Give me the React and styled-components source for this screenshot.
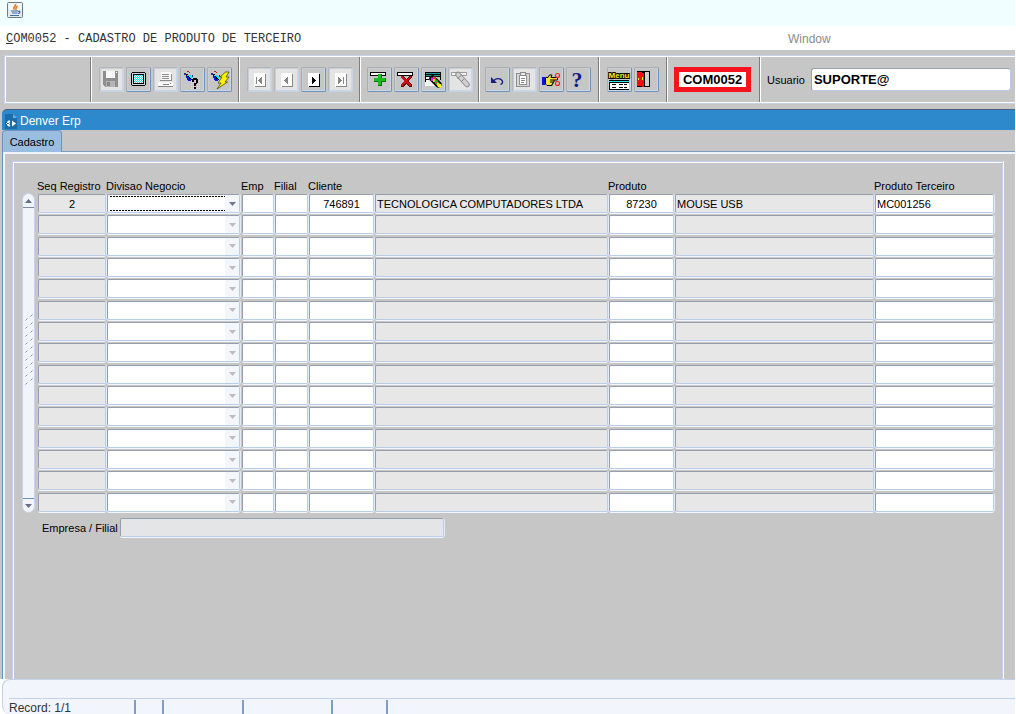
import React from "react";
import styled, { createGlobalStyle } from "styled-components";

const GlobalStyle = createGlobalStyle`
    * {
        box-sizing: border-box;
    }
    body {
        margin: 0;
        background-color: #fff;
        font-family: "Liberation Sans", Arial, sans-serif;
        font-size: 11px;
        color: #000;
    }
    button, input, select {
        font-family: inherit;
        font-size: inherit;
        color: inherit;
        margin: 0;
    }
`;
const Page = styled.div`
    min-height: 100vh;
    display: flex;
    flex-direction: column;
    padding-right: 1px;
`;
const TitleBar = styled.header`
    height: 26px;
    padding: 2px 7px;
    background-color: #f0feff;
`;
const MenuBar = styled.nav`
    height: 24px;
    display: grid;
    grid-template-columns: 782fr 227fr;
    align-items: center;
    padding: 2px 0 0 6px;
    background-color: #fff;
`;
const MenuItem = styled.button`
    justify-self: start;
    padding: 0;
    border: none;
    background: none;
    font-size: 12px;
    color: ${(props) => (props.$muted ? "#8c8c8c" : "#333")};
    font-family: ${(props) => (props.$mono ? '"Liberation Mono", "Courier New", monospace' : "inherit")};
`;
const ToolbarArea = styled.div`
    padding: 5px 0 5px 4px;
    background-color: #c6c6c6;
`;
const Toolbar = styled.div`
    display: flex;
    height: 49px;
    border: 1px solid #c3d3ea;
    border-right: none;
    box-shadow: inset 1px 1px 0 #fff, inset 0 -1px 0 #fff;
    padding: 1px 0 1px 1px;
`;
const ToolGroup = styled.div`
    display: flex;
    align-items: center;
    gap: ${(props) => props.$gap || "2px"};
    width: ${(props) => props.$width};
    flex: ${(props) => (props.$grow ? "1 1 auto" : "none")};
    padding: 0 4px 0 ${(props) => props.$inset || "7px"};
    border-right: ${(props) => (props.$grow ? "none" : "1px solid #7c7c7c")};
    box-shadow: ${(props) => (props.$first ? "none" : "inset 1px 0 0 #fff")};
`;
const ToolButton = styled.button`
    width: 25px;
    height: 25px;
    padding: 0;
    border: 1px solid;
    border-color: ${(props) => (props.disabled ? "#b2b5ba #c4d4e6 #c4d4e6 #b2b5ba" : "#adadad #6e92bb #6e92bb #adadad")};
    border-radius: 2px;
    background-color: ${(props) => (props.disabled ? "#e4e4e4" : "#c6c6c6")};
    box-shadow: inset 1px 1px 0 #c9ced6, inset -1px -1px 0 #c9d6e6;

    svg {
        display: block;
    }
`;
const ScreenCode = styled.strong`
    width: 77px;
    height: 25px;
    border: 5px solid #f5141d;
    background-color: #fff;
    font-size: 13px;
    line-height: 15px;
    text-align: center;
`;
const UserInput = styled.input`
    flex: 1;
    min-width: 0;
    height: 23px;
    padding: 0 2px;
    border: 1px solid;
    border-color: #9aa3b1 #b8cce6 #b8cce6 #9aa3b1;
    border-radius: 3px;
    outline: none;
    background-color: #fff;
    font-size: 13px;
    font-weight: bold;
`;
const Workspace = styled.main`
    flex: 1;
    display: flex;
    flex-direction: column;
    padding-left: 2px;
    background-color: #c6c6c6;
`;
const WindowTitle = styled.div`
    height: 21px;
    display: flex;
    align-items: center;
    gap: 3px;
    padding: 2px 3px 0;
    border-top: 1px solid #4a6080;
    border-radius: 5px 0 0 0;
    background-color: #2d89cc;
    color: #fff;
    font-size: 12px;
`;
const TabBar = styled.div`
    height: 22px;
    display: flex;
    border-bottom: 1px solid #7f9dbd;
`;
const Tab = styled.button`
    width: 60px;
    height: 22px;
    padding: 1px 0 0;
    border: 1px solid #7093bd;
    border-bottom: none;
    border-radius: 4px 4px 0 0;
    background-color: #9bbde0;
`;
const Panel = styled.section`
    flex: 1;
    display: flex;
    padding: 9px 12px 0 9px;
    border-left: 1px solid #6c91bb;
    box-shadow: inset 2px 2px 0 #f0f5fc;
`;
const Frame = styled.div`
    flex: 1;
    min-width: 0;
    padding: 17px 7px 0 9px;
    border: 1px solid #bfd0ea;
    border-bottom: none;
    box-shadow: inset 1px 1px 0 #fff, 1px 0 0 #fff;
`;
const GridArea = styled.div`
    display: flex;
    gap: 3px;
`;
const ScrollBar = styled.div`
    width: 13px;
    display: flex;
    flex-direction: column;
    justify-content: space-between;
    align-items: center;
    margin-top: 14px;
    border: 1px solid #c5d6ea;
    border-radius: 7px;
    background-color: #f1f5fb;
    overflow: hidden;
`;
const ScrollButton = styled.button`
    width: 100%;
    height: 14px;
    padding: 0;
    border: none;
    border-top: ${(props) => (props.$down ? "1px solid #6e92bb" : "none")};
    border-bottom: ${(props) => (props.$down ? "none" : "1px solid #7b89a5")};
    background: none;

    svg {
        display: block;
        margin: 0 auto;
    }
`;
const Records = styled.table`
    flex: 1;
    width: 100%;
    min-width: 0;
    table-layout: fixed;
    border-collapse: collapse;
`;
const HeadCell = styled.th`
    height: 14px;
    padding: 0;
    font-weight: normal;
    text-align: left;
    text-indent: -1px;
    white-space: nowrap;
    vertical-align: top;
    line-height: 14px;
`;
const Row = styled.tr`
    height: 21px;

    &:nth-child(3n) {
        height: 22px;
    }
    td {
        height: inherit;
        padding: 1px 1px 1px 0;
    }
    td:nth-child(2) {
        padding-right: 2px;
    }
`;
const cellBorder = `
    border: 1px solid;
    border-color: #979eab #b9cce8 #b9cce8 #979eab;
    border-radius: 2px;
    box-shadow: 0 1px 0 #f2f7ff, 1px 0 0 #e3ecf8;
    outline: none;
`;
const CellInput = styled.input`
    display: block;
    width: 100%;
    height: 19px;
    padding: 1px 1px 0;
    ${cellBorder}
    background-color: ${(props) => (props.readOnly ? "#e7e7e7" : "#fff")};
    text-align: ${(props) => (props.$center ? "center" : "left")};
`;
const Combo = styled.div`
    display: flex;
    width: 100%;
    height: 19px;
    padding-left: 2px;
    ${cellBorder}
    background-color: #fff;
`;
const ComboSelect = styled.select`
    flex: 1;
    min-width: 0;
    height: 100%;
    appearance: none;
    padding: 0;
    border: none;
    outline: none;
    background: ${(props) =>
        props.$focused
            ? `repeating-linear-gradient(90deg, #000 0 2px, transparent 2px 3px) 0 1px / 100% 1px no-repeat,
               repeating-linear-gradient(90deg, #000 0 2px, transparent 2px 3px) 0 15px / 100% 1px no-repeat`
            : "none"};
    opacity: 1;
`;
const ComboArrow = styled.span`
    width: 14px;
    display: flex;
    align-items: center;
    justify-content: center;
    background-color: #f3f6fb;
    pointer-events: none;
`;
const BranchLine = styled.div`
    display: flex;
    align-items: center;
    gap: 2px;
    margin-top: 5px;
    padding-left: 20px;
`;
const BranchInput = styled(CellInput)`
    width: 34%;
    background-color: #e4e5e7;
`;
const StatusBar = styled.footer`
    height: 35px;
    margin-left: 2px;
    padding: 18px 0 0 6px;
    border: 1px solid #c2d3e8;
    border-width: 1px 0 0 1px;
    border-radius: 8px 0 0 8px;
    background-color: #f2f5fb;
`;
const StatusLine = styled.div`
    display: flex;
    height: 16px;
    padding-top: 1px;
    border-top: 1px solid #c2d3ee;
    background-color: #f2f5fb;
    color: #333;
    font-size: 12px;
`;
const StatusCell = styled.div`
    width: ${(props) => props.$width};
    padding-top: 1px;
    border-right: 2px solid #7f9cc2;
`;

const JavaIcon = () => (
    <svg width="16" height="16" viewBox="0 0 16 16" fill="none">
        <rect x="0.5" y="0.5" width="15" height="15" rx="1" fill="#e3e9ed" stroke="#6f7b84" />
        <path d="M1.5 1.5h13v6h-13z" fill="#f4f8fa" />
        <path d="M8.5 2c1 2-3.5 3-1 5.500M10.500 4C8 5.500 9 6 9 8" stroke="#ee7a22" strokeWidth="1.600" />
        <path d="M4 9h7M5 11h5.500M3 13.500h9M11 9.500c3-1 2 2 0 2" stroke="#3f6d9e" strokeWidth="1.200" />
    </svg>
);

const Svg = ({ children, smooth }) => (
    <svg width="23" height="23" viewBox="1 1 23 23" shapeRendering={smooth ? "auto" : "crispEdges"} fill="none" aria-hidden="true">
        {children}
    </svg>
);

const SaveIcon = () => (
    <Svg>
        <path d="M4 4h15v16H6l-2-2z" fill="#8e8e8e" />
        <path d="M7 4h9v7H7z" fill="#f8f8f8" />
        <path d="M17 5h1v1h-1z" fill="#fff" />
        <path d="M7 14h9v6H7z" fill="#b5b5b5" />
        <path d="M8 15h3v4H8z" fill="#858585" />
    </Svg>
);
const ScreenIcon = () => (
    <Svg>
        <path d="M6 5h13v1h1v12h-1v1H6v-1H5V6h1z" fill="#000" />
        <path d="M6 6h13v12H6z" fill="#d5d5d5" />
        <path d="M7 7h11v10H7z" fill="#000" />
        <path d="M8 8h9v8H8z" fill="#f2ffff" />
        <path d="M8 8.500h9M8 10.500h9M8 12.500h9M8 14.500h9" stroke="#35dfe6" strokeDasharray="1 1" />
        <path d="M9 9.500h8M9 11.500h8M9 13.500h8M9 15.500h8" stroke="#35dfe6" strokeDasharray="1 1" />
    </Svg>
);
const PrinterIcon = () => (
    <Svg>
        <path d="M8 5h9l2 2v7H8z" fill="#fafafa" />
        <path d="M9 7.500h7M9 9.500h7M9 11.500h7M7 13.500h12M18.500 7v7" stroke="#8c8c8c" />
        <path d="M5 15h15v4H5z" fill="#fafafa" />
        <path d="M5 19.500h15M10 17.500h6" stroke="#888" />
        <path d="M17 16h1v1h-1z" fill="#888" />
    </Svg>
);
const Torch = () => (
    <>
        <path d="M4 6h2v1h2v1h2v1h2v4h-2v1H8v-2H7v-2H6V8H4z" fill="#000" />
        <path d="M7 8h4v1h2v2h-1v1h-1v-1h-1v-1H9V9H7z" fill="#28dfea" />
        <path d="M6 9h2v1h1v2h2v2H8v-1H7v-2H6z" fill="#0b17d8" />
        <path d="M4 6h2v2H4z" fill="#223a86" />
        <path d="M7 4h2v1H7zM9 5h1v1H9z" fill="#d51818" />
        <path d="M12 8h1v2h-1z" fill="#243b70" />
    </>
);
const QueryIcon = () => (
    <Svg>
        <path d="M11 13.500h10M11 15.500h10M11 17.500h10M11 19.500h10M11 21.500h10" stroke="#f2ee55" strokeDasharray="1 1" />
        <path d="M12 12h1v-1h4v1h1v4h-1v1h-1v2h-2v-3h2v-3h-2v2h-2zM14 20h2v2h-2z" fill="#000" />
        <Torch />
    </Svg>
);
const ExecuteIcon = () => (
    <Svg smooth>
        <Torch />
        <path d="M18.500 5h3.500l-3 5h3l-4 5h2.500L10 22l4-6h-3l4-6h-2z" fill="#fbf300" stroke="#4d4900" strokeWidth="0.800" />
    </Svg>
);
const NavIcon = ({ glyph, active }) => (
    <Svg>
        <path d="M7 6h11v14H7z" fill="#fcfcfc" />
        <path d="M8 19.500h10.500V7" stroke={active ? "#000" : "#8a8a8a"} />
        <path d={glyph} fill={active ? "#000" : "#858585"} />
    </Svg>
);
const RecordBar = () => <path d="M3.500 5.500h15v3h-15z" fill="#fff" stroke="#000" />;
const InsertIcon = () => (
    <Svg>
        <RecordBar />
        <path d="M11 7h4v4h4v4h-4v4h-4v-4H7v-4h4z" fill="#08730d" />
        <path d="M11 7h3v4h4v3h-4v4h-3v-4H7v-3h4z" fill="#18bd20" />
    </Svg>
);
const DeleteIcon = () => (
    <Svg>
        <RecordBar />
        <path d="M7 9h3v1h1v1h1v1h1v-1h1v-1h1V9h3v2h-1v1h-1v1h-1v2h1v1h1v1h1v3h-3v-1h-1v-1h-1v-1h-1v1h-1v1h-1v1H7v-3h1v-1h1v-1h1v-2H9v-1H8v-1H7z" fill="#650505" />
        <path d="M7 9h2v1h1v1h1v1h3v-1h1v-1h1V9h1v2h-1v1h-1v1h-1v2h1v1h1v1h1v2h-2v-1h-1v-1h-1v-1h-2v1h-1v1h-1v1H7v-2h1v-1h1v-1h1v-2H9v-1H8v-1H7z" fill="#c91016" />
    </Svg>
);
const ClearRecordIcon = () => (
    <Svg smooth>
        <path d="M4 10h12v9H4z" fill="#f4f4f4" />
        <path d="M4 5h16v5H4z" fill="#000" />
        <path d="M5 6h14v1H5zM5 8h14v1H5z" fill="#1d9a9e" />
        <path d="M4.500 10v5M5 12.500h3M19.500 10v3" stroke="#000" />
        <path d="M11.500 11.500l6 6" stroke="#000" strokeWidth="6.500" strokeLinecap="round" />
        <path d="M10 10.500h3.500V14H10z" fill="#ee1bd8" />
        <path d="M12 9.500h3V12h-3z" fill="#ed332c" />
        <path d="M12 12h2.500v3H12z" fill="#f3e822" />
        <path d="M14 12l2.500 1 1.500 3-3 1.500-1.500-2z" fill="#17b925" />
        <path d="M16.500 15.500l4 2v3h-3l-2-3z" fill="#fff01c" />
        <path d="M14.500 16.500l2-2" stroke="#ed332c" />
    </Svg>
);
const LockIcon = () => (
    <Svg smooth>
        <path d="M3.500 5.500h15v3h-15z" fill="#f4f4f4" stroke="#999" />
        <path d="M10 7.500l9 10" stroke="#8f8f8f" strokeWidth="5.500" strokeLinecap="round" />
        <path d="M10 7.500l9 10" stroke="#d0d0d0" strokeWidth="3.500" strokeLinecap="round" />
        <path d="M9.500 11.500l4-3.500M13 15l3.500-3.500" stroke="#858585" />
    </Svg>
);
const UndoIcon = () => (
    <Svg smooth>
        <path d="M6 10v6h6z" fill="#172080" />
        <path d="M8.500 14.500c2-4 8-3.500 9 0 .3 1.300-.5 2.500-2 3" stroke="#172080" strokeWidth="1.300" />
    </Svg>
);
const ClipboardIcon = () => (
    <Svg>
        <rect x="4.500" y="6.500" width="13" height="13" rx="1" fill="#d5d5d5" stroke="#919191" />
        <path d="M7.500 8.500h7v9h-7z" fill="#fff" stroke="#919191" />
        <path d="M8 5h6v4H8z" fill="#8c8c8c" />
        <path d="M9 6h4v2H9z" fill="#e4e4e4" />
        <path d="M9 11.500h4M9 13.500h4M9 15.500h3" stroke="#888" />
    </Svg>
);
const CutIcon = () => (
    <Svg smooth>
        <path d="M3 10h3v8H3z" fill="#0c18ce" />
        <path d="M6.500 10.500H9L10.500 8H13l-1 2.500h6.500v2.500H15v2h-1v2h-1v1.500H8L6.500 17z" fill="#f4e63a" stroke="#000" />
        <path d="M11 13h4M11 15h3" stroke="#000" />
        <circle cx="18.500" cy="8.500" r="2" stroke="#f02620" strokeWidth="1.200" />
        <circle cx="18.500" cy="16.500" r="2" stroke="#f02620" strokeWidth="1.200" />
        <path d="M15 11.500l2.500 3.500" stroke="#f02620" />
    </Svg>
);
const HelpIcon = () => (
    <Svg smooth>
        <text x="11" y="20" textAnchor="middle" fill="#101a80" fontFamily="Liberation Serif, serif" fontSize="22" fontWeight="bold">?</text>
    </Svg>
);
const MenuIcon = () => (
    <Svg smooth>
        <text x="12" y="11" textAnchor="middle" fill="#f9ef22" stroke="#000" strokeWidth="2" paintOrder="stroke" fontFamily="Liberation Sans, sans-serif" fontSize="8" fontWeight="bold">Menu</text>
        <path d="M2 13h20v10H2z" fill="#000" />
        <path d="M2 14h20v1H2z" fill="#23e6ee" />
        <path d="M3 16h19v6H3z" fill="#fff" />
        <path d="M5 17.500h5M12 17.500h8M5 20.500h5M12 20.500h8" stroke="#000" strokeDasharray="4 1" />
    </Svg>
);
const ExitIcon = () => (
    <Svg>
        <path d="M3 4h13v16H3z" fill="#000" />
        <path d="M11 5h4v14h-4z" fill="#d0d0d0" />
        <path d="M3 5h5v1h2v14H8v-1H3z" fill="#ee1111" />
        <path d="M4 11h1v2H4zM8 10h1v3H8z" fill="#ffef25" />
    </Svg>
);

const toolGroups = [
    {
        width: "148px",
        inset: "8px",
        tools: [
            ["Salvar", <SaveIcon />, true],
            ["Tela", <ScreenIcon />],
            ["Imprimir", <PrinterIcon />, true],
            ["Entrar consulta", <QueryIcon />],
            ["Executar consulta", <ExecuteIcon />],
        ],
    },
    {
        width: "121px",
        inset: "8px",
        tools: [
            ["Primeiro", <NavIcon glyph="M9 10h1v7H9zM14 10h1v7h-1v-1h-1v-1h-1v-1h-1v-1h1v-1h1v-1h1z" />, true],
            ["Anterior", <NavIcon glyph="M13 10h1v7h-1v-1h-1v-1h-1v-1h-1v-1h1v-1h1v-1h1z" />, true],
            ["Proximo", <NavIcon active glyph="M11 10h1v1h1v1h1v1h1v1h-1v1h-1v1h-1v1h-1z" />],
            ["Ultimo", <NavIcon glyph="M10 10h1v1h1v1h1v1h1v1h-1v1h-1v1h-1v1h-1zM15 10h1v7h-1z" />, true],
        ],
    },
    {
        width: "119px",
        tools: [
            ["Inserir", <InsertIcon />],
            ["Excluir", <DeleteIcon />],
            ["Limpar", <ClearRecordIcon />],
            ["Bloquear", <LockIcon />, true],
        ],
    },
    {
        width: "120px",
        inset: "6px",
        tools: [
            ["Desfazer", <UndoIcon />],
            ["Colar", <ClipboardIcon />, true],
            ["Recortar", <CutIcon />],
            ["Ajuda", <HelpIcon />],
        ],
    },
    {
        width: "68px",
        inset: "8px",
        tools: [
            ["Menu", <MenuIcon />],
            ["Sair", <ExitIcon />],
        ],
    },
];

const columns = [
    { key: "seq", label: "Seq Registro", width: "69px", readOnly: true, center: true },
    { key: "divisao", label: "Divisao Negocio", width: "135px", combo: true },
    { key: "emp", label: "Emp", width: "33px" },
    { key: "filial", label: "Filial", width: "34px" },
    { key: "cliente", label: "Cliente", width: "66px", center: true },
    { key: "clienteNome", label: "", name: "Nome do cliente", readOnly: true },
    { key: "produto", label: "Produto", width: "66px", center: true },
    { key: "produtoNome", label: "", name: "Nome do produto", width: "200px", readOnly: true },
    { key: "terceiro", label: "Produto Terceiro", width: "120px" },
];

const records = [
    {
        seq: "2",
        cliente: "746891",
        clienteNome: "TECNOLOGICA COMPUTADORES LTDA",
        produto: "87230",
        produtoNome: "MOUSE USB",
        terceiro: "MC001256",
    },
    ...Array.from({ length: 14 }, () => ({})),
];

const statusCells = ["127px", "28px", "80px", "89px", "55px"];

const Cell = ({ column, record, index }) => {
    const label = `${column.label || column.name} ${index + 1}`;
    if (column.combo) {
        return (
            <Combo>
                <ComboSelect aria-label={label} $focused={index === 0} disabled={index > 0}>
                    <option></option>
                </ComboSelect>
                <ComboArrow>
                    <svg width="7" height="4" viewBox="0 0 7 4">
                        <path d="M0 0h7L3.500 4z" fill={index === 0 ? "#707896" : "#bbbcbd"} />
                    </svg>
                </ComboArrow>
            </Combo>
        );
    }
    return (
        <CellInput
            type="text"
            aria-label={label}
            defaultValue={record[column.key] || ""}
            readOnly={column.readOnly}
            $center={column.center}
        />
    );
};

const App = () => {
    return (
        <>
        <GlobalStyle />
        <Page>
            <TitleBar>
                <JavaIcon />
            </TitleBar>
            <MenuBar>
                <MenuItem type="button" $mono><u>C</u>OM0052 - CADASTRO DE PRODUTO DE TERCEIRO</MenuItem>
                <MenuItem type="button" $muted>Window</MenuItem>
            </MenuBar>

            <ToolbarArea>
                <Toolbar>
                    <ToolGroup $width="85px" $first />
                    {toolGroups.map((group, i) => (
                        <ToolGroup key={i} $width={group.width} $inset={group.inset}>
                            {group.tools.map(([label, icon, disabled]) => (
                                <ToolButton key={label} type="button" aria-label={label} disabled={disabled}>
                                    {icon}
                                </ToolButton>
                            ))}
                        </ToolGroup>
                    ))}
                    <ToolGroup $width="93px">
                        <ScreenCode>COM0052</ScreenCode>
                    </ToolGroup>
                    <ToolGroup $grow $gap="6px">
                        <label htmlFor="usuario">Usuario</label>
                        <UserInput id="usuario" type="text" defaultValue="SUPORTE@" />
                    </ToolGroup>
                </Toolbar>
            </ToolbarArea>

            <Workspace>
                <WindowTitle>
                    <svg width="12" height="15" viewBox="0 0 12 15">
                        <path d="M0 0h8l4 4v11H0z" fill="#1b6ca9" />
                        <path d="M8 0l4 4H8z" fill="#6cb0e0" />
                        <path d="M5 6.500H3.500L2 8v3l1.500 1.500H5v-2H4v-2h1zM1 9h4v1H1zM7 6.500L11 9.500 7 12.500z" fill="#fff" />
                    </svg>
                    Denver Erp
                </WindowTitle>
                <TabBar role="tablist">
                    <Tab type="button" role="tab" aria-selected="true">Cadastro</Tab>
                </TabBar>
                <Panel>
                    <Frame>
                        <GridArea>
                            <ScrollBar>
                                <ScrollButton type="button" aria-label="Subir">
                                    <svg width="7" height="4" viewBox="0 0 7 4"><path d="M0 4h7L3.500 0z" fill="#686d88" /></svg>
                                </ScrollButton>
                                <svg width="8" height="90" viewBox="0 0 8 90" stroke="#7b9cc2">
                                    {Array.from({ length: 9 }, (_, i) => (
                                        <path key={i} d={`M0.500 ${i * 8 + 12.500}l2-2M5.500 ${i * 8 + 8.500}l2-2`} />
                                    ))}
                                </svg>
                                <ScrollButton type="button" aria-label="Descer" $down>
                                    <svg width="7" height="4" viewBox="0 0 7 4"><path d="M0 0h7L3.500 4z" fill="#686d88" /></svg>
                                </ScrollButton>
                            </ScrollBar>
                            <Records>
                                <colgroup>
                                    {columns.map((column) => (
                                        <col key={column.key} width={column.width && parseInt(column.width, 10)} />
                                    ))}
                                </colgroup>
                                <thead>
                                    <tr>
                                        {columns.map((column) => (
                                            <HeadCell key={column.key} scope="col">{column.label}</HeadCell>
                                        ))}
                                    </tr>
                                </thead>
                                <tbody>
                                    {records.map((record, index) => (
                                        <Row key={index}>
                                            {columns.map((column) => (
                                                <td key={column.key}>
                                                    <Cell column={column} record={record} index={index} />
                                                </td>
                                            ))}
                                        </Row>
                                    ))}
                                </tbody>
                            </Records>
                        </GridArea>
                        <BranchLine>
                            <label htmlFor="empresa">Empresa / Filial</label>
                            <BranchInput id="empresa" type="text" readOnly />
                        </BranchLine>
                    </Frame>
                </Panel>
            </Workspace>

            <StatusBar>
                <StatusLine>
                    {statusCells.map((width, i) => (
                        <StatusCell key={i} $width={width}>{i === 0 ? "Record: 1/1" : ""}</StatusCell>
                    ))}
                </StatusLine>
            </StatusBar>
        </Page>
        </>
    );
};

export default App;
